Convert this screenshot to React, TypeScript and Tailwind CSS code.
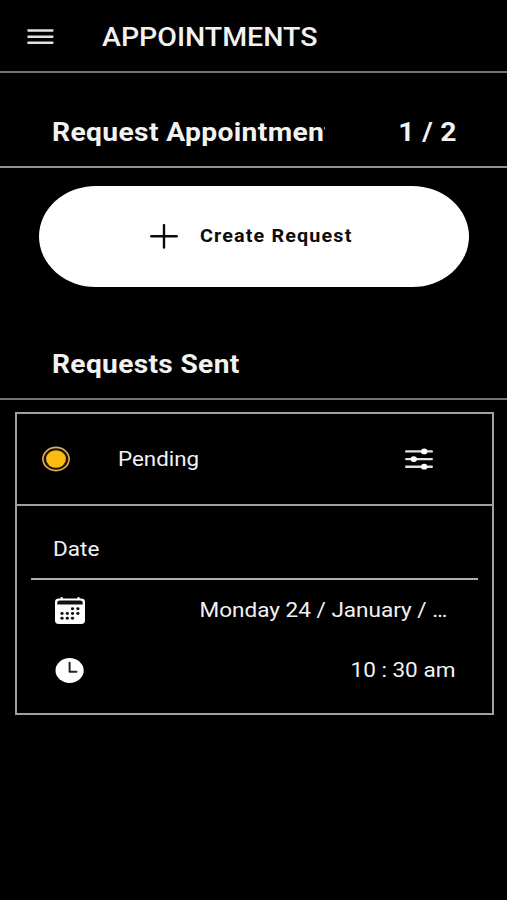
import React from 'react'

interface LabelProps {
  children: React.ReactNode
  className?: string
}

const Label: React.FC<LabelProps> = ({ children, className = '' }) => (
  <span className={`inline-block whitespace-nowrap ${className}`}>
    {children}
  </span>
)

const MenuIcon = () => (
  <svg width="27" height="17" viewBox="0 0 27 17" fill="#e2e2e2">
    <rect x="0.4" y="1.2" width="26" height="2.5" rx="0.6" />
    <rect x="0.4" y="7.4" width="26" height="2.5" rx="0.6" />
    <rect x="0.4" y="13.6" width="26" height="2.5" rx="0.6" />
  </svg>
)

const PlusIcon = () => (
  <svg width="28" height="25" viewBox="0 0 28 25" stroke="#0a0a0a" strokeWidth="2.4" strokeLinecap="round">
    <path d="M1.2 12.2H26.8M14 1.1V23.6" />
  </svg>
)

const StatusIcon = () => (
  <svg width="30" height="27" viewBox="0 0 30 27">
    <ellipse cx="15" cy="13" rx="13.1" ry="11.6" fill="#241500" stroke="#d6ad62" strokeWidth="1.6" />
    <ellipse cx="15" cy="13" rx="9.9" ry="8.8" fill="#fcbd12" />
  </svg>
)

const OptionsIcon = () => (
  <svg width="28" height="23" viewBox="0 0 28 23" fill="#fff">
    <path d="M1.2 3.4H26.8M1.2 11.1H26.8M1.2 18.7H26.8" stroke="#e2e2e2" strokeWidth="2.4" strokeLinecap="round" />
    <ellipse cx="19.2" cy="3.4" rx="3.2" ry="2.9" />
    <ellipse cx="8.8" cy="11.1" rx="3.2" ry="2.9" />
    <ellipse cx="19.2" cy="18.7" rx="3.2" ry="2.9" />
  </svg>
)

const dots = [
  [17.5, 11.7], [22.9, 11.7],
  [7, 16.5], [12.3, 16.5], [17.5, 16.5], [22.9, 16.5],
  [7, 21.3], [12.3, 21.3], [17.5, 21.3],
]

const CalendarIcon = () => (
  <svg width="30" height="27" viewBox="0 0 30 27">
    <path
      d="M5.5 1.2Q5.5 0 6.7 0T7.9 1.2V1.6H22.3V1.2Q22.3 0 23.5 0T24.7 1.2V1.6H26Q30 1.6 30 5V23.5Q30 27 26 27H4Q0 27 0 23.5V5Q0 1.6 4 1.6H5.5Z"
      fill="#fff"
    />
    <path d="M2.3 7.4V5.9Q2.3 3.6 5 3.6H25Q27.7 3.6 27.7 5.9V7.4Z" fill="#111" />
    {dots.map(([x, y]) => (
      <ellipse key={`${x}-${y}`} cx={x} cy={y} rx="1.65" ry="1.45" fill="#111" />
    ))}
  </svg>
)

const ClockIcon = () => (
  <svg width="30" height="25" viewBox="0 0 30 25">
    <ellipse cx="14.6" cy="12.5" rx="14.1" ry="12.4" fill="#fff" />
    <path d="M14.6 4.8V13.7H21.4" fill="none" stroke="#222" strokeWidth="2" strokeLinecap="round" strokeLinejoin="round" />
  </svg>
)

const App: React.FC = () => (
  <div className="h-[900px] w-[507px] overflow-hidden bg-black font-['Roboto',sans-serif] text-[#f2f2f2]">
    <header className="flex h-[73px] items-center border-b-2 border-[#747474] pt-px pl-[27px]">
      <MenuIcon />
      <Label className="mt-[3px] ml-[48px] origin-left scale-x-[1.14] text-[25px] leading-[30px] font-medium">
        APPOINTMENTS
      </Label>
    </header>

    <div className="flex h-[95px] items-center justify-between border-b-2 border-[#929292] pt-[27px] pr-[50px] pl-[51.5px]">
      {/* the title is clipped by its column, without an ellipsis */}
      <div className="w-[273.5px] overflow-hidden">
        <Label className="origin-left scale-x-[1.13] text-[25px] leading-[32px] font-bold tracking-[0.3px]">
          Request Appointment
        </Label>
      </div>
      <Label className="origin-right scale-x-[1.13] text-[25px] leading-[32px] font-bold tracking-[0.3px]">1 / 2</Label>
    </div>

    <div className="px-[38.5px] pt-[17.5px]">
      <button className="flex h-[101px] w-full items-center rounded-[57px/50.5px] bg-white pl-[111px] text-[#0c0c0c]">
        <PlusIcon />
        <Label className="ml-[22px] origin-left scale-x-[1.13] text-[17.5px] font-bold tracking-[1px]">
          Create Request
        </Label>
      </button>
    </div>

    <div className="mt-[26.5px] flex h-[87px] items-center border-b-2 border-[#747474] pt-[18px] pl-[51.5px]">
      <Label className="origin-left scale-x-[1.125] text-[25px] leading-[32px] font-bold tracking-[0.3px]">
        Requests Sent
      </Label>
    </div>

    <section className="mt-[12px] ml-[15px] h-[303px] w-[479px] border-2 border-[#a0a0a0]">
      <div className="flex h-[92px] items-center border-b-2 border-[#a0a0a0] pl-[24px]">
        <StatusIcon />
        <Label className="ml-[47px] origin-left scale-x-[1.09] text-[20.5px]">Pending</Label>
        <span className="mr-[59.5px] ml-auto">
          <OptionsIcon />
        </span>
      </div>
      <div className="mx-[14px] flex h-[74px] items-center border-b-2 border-[#b0b0b0] pt-[14px] pl-[22px]">
        <Label className="origin-left scale-x-[1.1] text-[20.5px]">Date</Label>
      </div>
      <div className="flex h-[60px] items-center pr-[45px] pl-[38px]">
        <CalendarIcon />
        <Label className="ml-auto origin-right scale-x-[1.1] text-[20.5px]">Monday 24 / January / …</Label>
      </div>
      <div className="flex h-[60px] items-center pr-[37px] pl-[38px]">
        <ClockIcon />
        <Label className="ml-auto origin-right scale-x-[1.1] text-[20.5px]">10 : 30 am</Label>
      </div>
    </section>
  </div>
)

export default App
